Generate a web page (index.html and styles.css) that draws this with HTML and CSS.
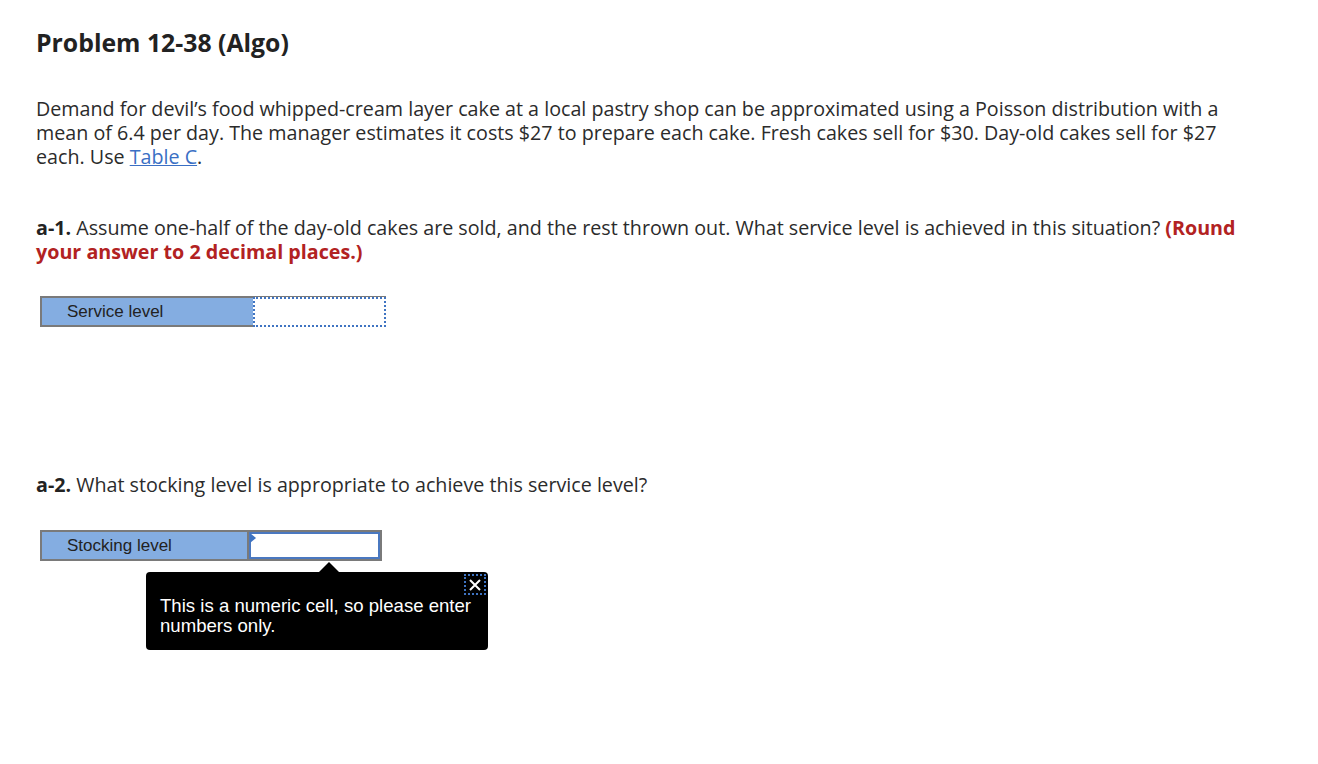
FILE: index.html
```html
<!DOCTYPE html>
<html>
<head>
<meta charset="utf-8">
<link rel="stylesheet" href="styles.css">
</head>
<body>
<div class="page">
  <h1 class="title">Problem 12-38 (Algo)</h1>
  <p class="intro">Demand for devil’s food whipped-cream layer cake at a local pastry shop can be approximated using a Poisson distribution with a mean of 6.4 per day. The manager estimates it costs $27 to prepare each cake. Fresh cakes sell for $30. Day-old cakes sell for $27 each. Use <a href="#" class="link">Table C</a>.</p>

  <p class="question q1"><b>a-1.</b> Assume one-half of the day-old cakes are sold, and the rest thrown out. What service level is achieved in this situation? <span class="hint">(Round your answer to 2 decimal places.)</span></p>

  <div class="answer-table t1">
    <div class="label-cell">Service level</div>
    <div class="input-cell dotted"></div>
  </div>

  <p class="question q2"><b>a-2.</b> What stocking level is appropriate to achieve this service level?</p>

  <div class="answer-wrap">
    <div class="answer-table t2">
      <div class="label-cell">Stocking level</div>
      <div class="input-cell focused"><span class="corner"></span></div>
    </div>
    <div class="tooltip">
      <span class="arrow"></span>
      <div class="close"><svg width="14" height="14" viewBox="0 0 14 14"><path d="M2 2 L12 12 M12 2 L2 12" stroke="#fff" stroke-width="2" fill="none"/></svg></div>
      <div class="tip-text">This is a numeric cell, so please enter numbers only.</div>
    </div>
  </div>
</div>
</body>
</html>
```

FILE: styles.css
```css
html, body {
  margin: 0;
  padding: 0;
  background: #fff;
}
.page {
  padding: 27px 36px 0 36px;
  font-family: "Open Sans", sans-serif;
  color: #2b2b2b;
}
.title {
  margin: 0;
  font-size: 24.8px;
  font-weight: 700;
  line-height: 30px;
  color: #222;
}
.intro {
  margin: 40px 0 0 0;
  font-size: 19.7px;
  line-height: 24px;
  width: 1224px;
}
.link {
  color: #3a6fc4;
  text-decoration: underline;
}
.question {
  margin: 0;
  font-size: 19.7px;
  line-height: 24px;
  width: 1240px;
}
.question b {
  font-weight: 700;
  color: #222;
}
.q1 { margin-top: 47px; }
.hint {
  color: #b22222;
  font-weight: 700;
}
.answer-table {
  display: flex;
  margin-left: 4px;
  border: 2px solid #7a7a7a;
  height: 27px;
  box-sizing: content-box;
  font-family: "Liberation Sans", Arial, sans-serif;
  font-size: 17px;
  color: #222;
}
.t1 { margin-top: 32px; width: 342px; }
.label-cell {
  background: #84ade1;
  padding-left: 25px;
  display: flex;
  align-items: center;
  box-sizing: border-box;
}
.t1 .label-cell { width: 211px; }
.input-cell {
  flex: 1;
  background: #fff;
  position: relative;
}
.dotted {
  border: 2px dotted #3f74c2;
  margin: -1px -2px -2px 0;
}
.q2 { margin-top: 146px; }
.answer-wrap {
  position: relative;
  margin-top: 33px;
  height: 130px;
}
.t2 { width: 338px; }
.t2 .label-cell { width: 207px; border-right: 2px solid #7a7a7a; }
.focused {
  border: 2px solid #4a78c0;
  margin: 0;
}
.corner {
  position: absolute;
  left: -1px;
  top: -1px;
  width: 0;
  height: 0;
  border-top: 5px solid transparent;
  border-bottom: 5px solid transparent;
  border-left: 6px solid #3f74c2;
}
.tooltip {
  position: absolute;
  left: 110px;
  top: 42px;
  width: 342px;
  height: 78px;
  background: #000;
  border-radius: 4px;
  box-sizing: border-box;
  padding: 24px 14px 0 14px;
  font-family: "Liberation Sans", Arial, sans-serif;
  font-size: 18.6px;
  line-height: 20px;
  color: #fff;
}
.arrow {
  position: absolute;
  left: 173px;
  top: -10px;
  width: 0;
  height: 0;
  border-left: 10px solid transparent;
  border-right: 10px solid transparent;
  border-bottom: 10px solid #000;
}
.close {
  position: absolute;
  right: 2px;
  top: 2px;
  width: 22px;
  height: 21px;
  box-sizing: border-box;
  border: 2px dotted #3f74c2;
  display: flex;
  align-items: center;
  justify-content: center;
}
.tip-text {
  margin: 0;
}
```
